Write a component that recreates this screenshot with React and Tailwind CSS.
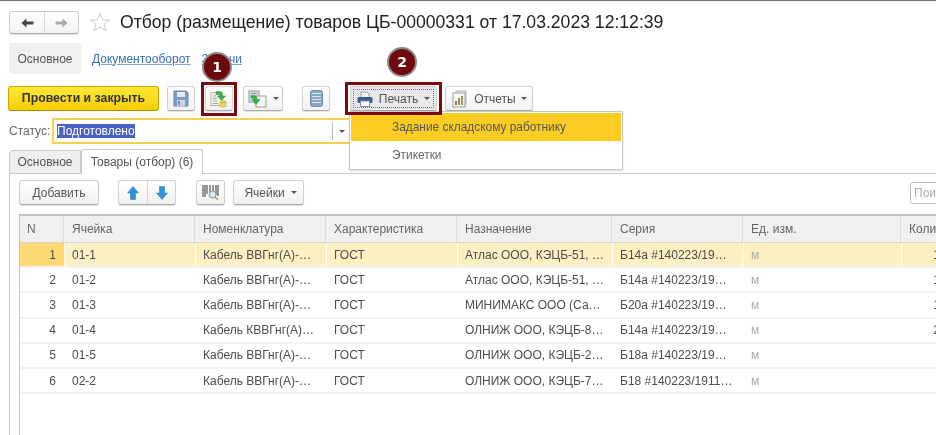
import React from "react";

const cols = "grid grid-cols-[44px_131px_131px_131px_155px_131px_158px_60px]";

const rows = [
  ["1", "01-1", "Кабель ВВГнг(А)-…", "ГОСТ", "Атлас ООО, КЭЦБ-51, …", "Б14а #140223/19…", "м", "1"],
  ["2", "01-2", "Кабель ВВГнг(А)-…", "ГОСТ", "Атлас ООО, КЭЦБ-51, …", "Б14а #140223/19…", "м", "1"],
  ["3", "01-3", "Кабель ВВГнг(А)-…", "ГОСТ", "МИНИМАКС ООО (Са…", "Б20а #140223/19…", "м", "1"],
  ["4", "01-4", "Кабель КВВГнг(А)…", "ГОСТ", "ОЛНИЖ ООО, КЭЦБ-8…", "Б14а #140223/19…", "м", "2"],
  ["5", "01-5", "Кабель ВВГнг(А)-…", "ГОСТ", "ОЛНИЖ ООО, КЭЦБ-2…", "Б18а #140223/19…", "м", ""],
  ["6", "02-2", "Кабель ВВГнг(А)-…", "ГОСТ", "ОЛНИЖ ООО, КЭЦБ-7…", "Б18 #140223/1911…", "м", ""],
];

const headers = ["N", "Ячейка", "Номенклатура", "Характеристика", "Назначение", "Серия", "Ед. изм.", "Количество"];

const Caret = () => (
  <span className="inline-block w-0 h-0 border-x-[3px] border-x-transparent border-t-[3px] border-t-[#555]" />
);

const Btn = ({ className = "", children }) => (
  <div className={`h-[25px] flex items-center justify-center rounded-[3px] border border-[#d0d0d0] border-b-[#a9a9a9] bg-gradient-to-b from-white to-[#f1f1f1] shadow-[0_1px_1px_rgba(0,0,0,0.12)] text-[#555] shrink-0 ${className}`}>
    {children}
  </div>
);

const Badge = ({ n, className }) => (
  <div className={`absolute w-[30px] h-[30px] rounded-full bg-[#6e0a0e] border-2 border-[#8a8a8a] text-white font-bold text-[14px] flex items-center justify-center font-['DejaVu_Sans',sans-serif] ${className}`}>
    {n}
  </div>
);

const NavArrow = ({ right, color }) => (
  <svg width="13" height="10" viewBox="0 0 13 10" className={right ? "rotate-180" : ""}>
    <path d="M0.500 5 5.500 0.500V3.500H12.500V6.500H5.500V9.500z" fill={color} />
  </svg>
);

const SaveIcon = () => (
  <svg width="16" height="17" viewBox="0 0 16 17">
    <path d="M1 1h12l2 2v13H1z" fill="#7d9cc2" stroke="#6686ab" />
    <rect x="4" y="2" width="8" height="5" fill="#e3ebf4" />
    <rect x="4" y="10" width="8" height="6" fill="#c9d3de" />
    <rect x="5" y="11" width="2" height="4" fill="#6b8fb8" />
  </svg>
);

const PostIcon = () => (
  <svg width="18" height="18" viewBox="0 0 18 18">
    <rect x="1" y="2.500" width="11" height="13" fill="#f2f2ea" stroke="#b5b5b0" />
    <path d="M3 6h3M3 8.500h4M3 11h4M3 13.500h5" stroke="#a5a5a5" />
    <path d="M6 1.500h3c2.500 0 3.500 1.300 3.500 3.500v1H15.500l-4 4.500-4-4.500H9.500V5.500C9.500 5 9 4.500 8.500 4.500H6z" fill="#3fb34a" stroke="#2a8e36" strokeWidth="0.500" />
    <ellipse cx="13" cy="12" rx="3" ry="1.300" fill="#f1dc7c" stroke="#b99f33" strokeWidth="0.500" />
    <path d="M10 12v4.300c0 1.200 6 1.200 6 0V12c0 1.200-6 1.200-6 0z" fill="#ecd36a" stroke="#b99f33" strokeWidth="0.500" />
  </svg>
);

const GenIcon = () => (
  <svg width="19" height="18" viewBox="0 0 19 18">
    <rect x="1" y="1" width="10" height="11" fill="#d9dfe3" stroke="#8f989e" />
    <path d="M3 3.500h6" stroke="#8f989e" />
    <rect x="8" y="6" width="10" height="11" fill="#f4f4f4" stroke="#a0a0a0" />
    <path d="M3 5.500h2.500C8 5.500 9 7 9 9v.500h3l-4 5-4-5h2V9c0-.500-.500-1-1-1H3z" fill="#38b04a" stroke="#26893a" strokeWidth="0.500" />
  </svg>
);

const ListIcon = () => (
  <svg width="13" height="17" viewBox="0 0 13 17">
    <rect x="0.500" y="0.500" width="12" height="16" rx="2" fill="#8ba6c0" stroke="#7390ac" />
    <path d="M2 3.500h9M2 6.500h9M2 9.500h9M2 12.500h9" stroke="#dce6ef" strokeWidth="1.200" />
  </svg>
);

const PrintIcon = () => (
  <svg width="16" height="16" viewBox="0 0 16 16">
    <path d="M4 1h6l2 2v4H4z" fill="#f4f6f8" stroke="#8aa0b5" />
    <rect x="0.500" y="6" width="15" height="6" rx="1.500" fill="#33618f" />
    <rect x="3.500" y="10" width="9" height="5.500" fill="#fff" stroke="#7b90a5" />
  </svg>
);

const ReportIcon = () => (
  <svg width="18" height="18" viewBox="0 0 18 18">
    <rect x="5" y="1" width="10" height="13" fill="#f0f0f0" stroke="#b0b0b0" />
    <rect x="2" y="3" width="12" height="14" fill="#fafafa" stroke="#9c9c9c" />
    <rect x="4" y="11" width="2" height="4" fill="#d65a4a" />
    <rect x="7" y="8" width="2" height="7" fill="#5aa85a" />
    <rect x="10" y="6" width="2" height="9" fill="#c9863c" />
  </svg>
);

const Arrow = ({ down }) => (
  <svg width="12" height="14" viewBox="0 0 12 14" className={down ? "rotate-180" : ""}>
    <path d="M6 0.500 11.500 7H8.500v6.500h-5V7H0.500z" fill="#2f93dc" stroke="#2278b8" strokeWidth="0.500" />
  </svg>
);

const BarcodeIcon = () => (
  <svg width="18" height="17" viewBox="0 0 18 17">
    <path d="M1 1v12M3 1v12M5 1v9M8 1v8M11 1v7M14 1v10M16 1v11" stroke="#666" strokeWidth="1.300" />
    <circle cx="10.500" cy="10.500" r="3.500" fill="#dfe8f2" stroke="#7d97b5" />
    <path d="M13 13l3 3" stroke="#c69a4a" strokeWidth="1.600" />
  </svg>
);

const Star = () => (
  <svg width="22" height="21" viewBox="0 0 22 21">
    <path d="M11 1.500 13.700 8H20.500L15 12.200 17 19 11 15 5 19 7 12.200 1.500 8H8.300z" fill="#fff" stroke="#c9c9c9" />
  </svg>
);

export default function App() {
  return (
    <div className="relative w-[936px] h-[435px] overflow-hidden bg-white text-[12px] text-[#4d4d4d] font-['Liberation_Sans',Arial,sans-serif] blur-[0.3px]">
      <div className="h-px bg-[#777]" />

      {/* title */}
      <div className="flex items-center h-[25px] mt-[9px] pl-[9px]">
        <div className="flex w-[70px] h-[23px] rounded-[3px] border border-[#ccc] border-b-[#aaa] bg-gradient-to-b from-white to-[#f3f3f3] shadow-[0_1px_1px_rgba(0,0,0,0.1)]">
          <div className="w-[35px] flex items-center justify-center border-r border-[#d8d8d8]"><NavArrow color="#444" /></div>
          <div className="flex-1 flex items-center justify-center"><NavArrow right color="#aaa" /></div>
        </div>
        <div className="ml-[10px] mr-[9px] flex"><Star /></div>
        <div className="text-[17.600px] text-[#222] whitespace-nowrap">Отбор (размещение) товаров ЦБ-00000331 от 17.03.2023 12:12:39</div>
      </div>

      {/* sections */}
      <div className="flex items-center h-[31px] mt-[8px] pl-[9px]">
        <div className="w-[72px] h-full flex items-center justify-center rounded-[3px] bg-[#f0f0f0] text-[#555]">Основное</div>
        <div className="ml-[11px] text-[#3a6fb5] underline decoration-[#7fa3d1]">Документооборот</div>
        <div className="ml-[11px] text-[#3a6fb5] underline decoration-[#7fa3d1]">Задачи</div>
      </div>

      {/* toolbar */}
      <div className="flex items-center h-[25px] mt-[12px] pl-[8px]">
        <div className="w-[151px] h-[25px] flex items-center justify-center rounded-[3px] border border-[#c9a900] border-b-[#a88d00] bg-gradient-to-b from-[#ffe933] to-[#f7cd00] text-[#333] font-bold text-[12.300px]">Провести и закрыть</div>
        <Btn className="w-[28px] ml-[8px]"><SaveIcon /></Btn>
        <Btn className="w-[28px] ml-[10px]"><PostIcon /></Btn>
        <Btn className="w-[40px] ml-[10px] gap-[6px]"><GenIcon /><Caret /></Btn>
        <Btn className="w-[28px] ml-[19px]"><ListIcon /></Btn>
        <Btn className="w-[87px] ml-[20px] gap-[6px] bg-none bg-[#e8e8e8] border-[#bbb]">
          <div className="flex items-center gap-[6px] border border-dotted border-[#777] w-[81px] h-[19px] justify-center">
            <PrintIcon />
            <span>Печать</span>
            <Caret />
          </div>
        </Btn>
        <Btn className="w-[88px] ml-[8px] gap-[5px]"><ReportIcon /><span>Отчеты</span><Caret /></Btn>
      </div>

      {/* status */}
      <div className="flex items-center h-[26px] mt-[7px] pl-[9px]">
        <span className="w-[43px] text-[#666]">Статус:</span>
        <div className="w-[298px] h-[26px] flex items-center border-2 border-r-0 border-[#fbd04a] bg-white">
          <span className="ml-[3px] bg-[#4a62c4] text-white leading-[14px]">Подготовлено</span>
          <div className="ml-auto w-[18px] h-[18px] border-l border-[#bbb] flex items-center justify-center"><Caret /></div>
        </div>
      </div>

      {/* tabs */}
      <div className="flex h-[25px] mt-[5px] pl-[9px]">
        <div className="w-[72px] h-[24px] mt-px flex items-center justify-center border border-[#ccc] rounded-tl-[3px] bg-[#efefef] text-[#555]">Основное</div>
        <div className="w-[122px] h-[25px] flex items-center justify-center border border-b-0 border-[#ccc] rounded-t-[3px] bg-white text-[#555] relative z-10">Товары (отбор) (6)</div>
      </div>

      {/* panel */}
      <div className="ml-[9px] -mt-px border-l border-t border-[#ccc] pl-[9px] h-[300px]">
        <div className="flex items-center h-[25px] mt-[6px]">
          <Btn className="w-[80px]">Добавить</Btn>
          <div className="ml-[19px] w-[58px] h-[25px] shrink-0 flex rounded-[3px] border border-[#d0d0d0] border-b-[#a9a9a9] bg-gradient-to-b from-white to-[#f1f1f1] shadow-[0_1px_1px_rgba(0,0,0,0.12)]">
            <div className="w-[29px] flex items-center justify-center border-r border-[#d8d8d8]"><Arrow /></div>
            <div className="flex-1 flex items-center justify-center"><Arrow down /></div>
          </div>
          <Btn className="w-[29px] ml-[20px]"><BarcodeIcon /></Btn>
          <Btn className="w-[71px] ml-[8px] gap-[6px] pl-[4px]"><span>Ячейки</span><Caret /></Btn>
          <div className="ml-[606px] w-[40px] h-[22px] shrink-0 rounded-[3px] border border-[#bbb] pl-[3px] text-[#aaa] flex items-center">Поиск</div>
        </div>

        {/* table */}
        <div className="mt-[9px] w-[920px] border-l border-t-2 border-[#c4c4c4] h-[230px] overflow-hidden">
          <div className={`${cols} h-[27px] bg-[#f0f0f0] border-b border-[#d6d6d6]`}>
            {headers.map((h, i) => (
              <div key={h} className={`flex items-center whitespace-nowrap overflow-hidden text-[#666] border-r border-[#dcdcdc] ${i === 0 ? "pl-[7px]" : "pl-[8px]"}`}>{h}</div>
            ))}
          </div>
          {rows.map((r, ri) => (
            <div key={r[0]} className={`${cols} h-[25.200px] border-b-2 border-[#f2f2f2] ${ri === 0 ? "bg-[#fdf0c3]" : ""}`}>
              {r.map((c, i) => (
                <div
                  key={i}
                  className={`flex items-center whitespace-nowrap overflow-hidden ${
                    i === 0 ? `justify-end pr-[8px] ${ri === 0 ? "bg-[#fbd975]" : ""}` : i === 7 ? "justify-end pr-[21px] border-l border-white" : "pl-[7px] border-l border-white"
                  } ${i === 6 ? "text-[#aaa]" : ""}`}
                >
                  {c}
                </div>
              ))}
            </div>
          ))}
        </div>
      </div>

      {/* print menu */}
      <div className="absolute left-[349px] top-[111px] w-[274px] h-[59px] p-px bg-white border border-[#c8c8c8] shadow-[0_1px_2px_rgba(0,0,0,0.15)] z-20">
        <div className="h-[28px] pt-[2px] bg-[#fbcd23] flex items-center pl-[41px] text-[11.900px] text-[#555]">Задание складскому работнику</div>
        <div className="h-[28px] pt-[2px] flex items-center pl-[41px] text-[11.900px] text-[#666]">Этикетки</div>
      </div>

      {/* callouts */}
      <div className="absolute left-[201px] top-[82px] w-[36px] h-[34px] border-[3px] border-[#7b0a0f] z-30" />
      <div className="absolute left-[345px] top-[82px] w-[97px] h-[33px] border-[3px] border-[#7b0a0f] z-30" />
      <Badge n="1" className="left-[202px] top-[52px] z-40" />
      <Badge n="2" className="left-[387px] top-[47px] z-40" />
    </div>
  );
}
